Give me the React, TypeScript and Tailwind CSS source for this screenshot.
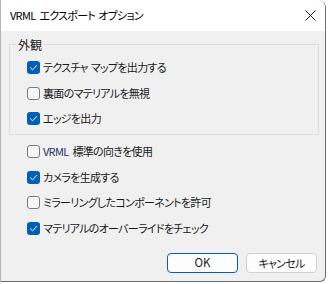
import React from 'react';

const jp = "font-['Noto_Sans_CJK_JP','Noto_Sans',sans-serif] [font-feature-settings:'palt']";
const label = 'text-[11px] leading-none tracking-[-0.7px] text-[#1a1a1a]';

function Check({ checked }: { checked: boolean }) {
  if (checked) {
    return (
      <span className="flex h-[13px] w-[13px] shrink-0 items-center justify-center rounded-[3px] bg-[#005fb8]">
        <svg width="9" height="9" viewBox="0 0 9 9" fill="none">
          <path d="M1.5 4.8 L3.6 6.8 L7.6 2.4" stroke="white" strokeWidth="1" strokeLinecap="round" strokeLinejoin="round" />
        </svg>
      </span>
    );
  }
  return <span className="h-[13px] w-[13px] shrink-0 rounded-[3px] border border-[#7a7a7a] bg-[#f7f7f7]" />;
}

function Row({ checked, children }: { checked: boolean; children: React.ReactNode }) {
  return (
    <div className="flex h-[25.5px] items-center gap-[3px] pl-[27px]">
      <Check checked={checked} />
      <span className={label}>{children}</span>
    </div>
  );
}

export default function App() {
  return (
    <div className={`h-[284px] w-[328px] bg-white ${jp}`}>
      <div className="flex h-[282px] w-[326px] flex-col overflow-hidden rounded-tr-[8px] rounded-br-[6px] border-l border-r border-b border-l-[#b4b4b4] border-r-[#6e6e6e] border-b-[#6e6e6e] bg-[#f0f0f0]">
        {/* title bar */}
        <div className="flex h-[31px] shrink-0 items-center justify-between bg-white pl-[9px] pr-[9px]">
          <span className="text-[11px] leading-none tracking-[-0.7px] text-black">
            VRML<span className="ml-[4px]">エクスポート</span>
            <span className="ml-[3px]">オプション</span>
          </span>
          <svg width="11" height="11" viewBox="0 0 11 11">
            <path d="M0.5 0.5 L10.5 10.5 M10.5 0.5 L0.5 10.5" stroke="#1a1a1a" strokeWidth="1" />
          </svg>
        </div>

        <div className="flex flex-1 flex-col pl-[8px] pr-[6px]">
          <fieldset className="mt-[6px] h-[98px] border border-[#dcdcdc] pt-[3px]">
            <legend className="ml-[6px] px-[2px] text-[12px] leading-[15px] text-[#1a1a1a]">外観</legend>
            <div className="-ml-[10px]">
              <Row checked>
                テクスチャ<span className="ml-[3px]">マップを出力する</span>
              </Row>
              <Row checked={false}>裏面のマテリアルを無視</Row>
              <Row checked>エッジを出力</Row>
            </div>
          </fieldset>

          <div className="-ml-[9px] mt-[4px]">
            <Row checked={false}>
              <span className="text-[#1f2f6e]">VRML</span>
              <span className="ml-[4px]">標準の向きを使用</span>
            </Row>
            <Row checked>カメラを生成する</Row>
            <Row checked={false}>ミラーリングしたコンポーネントを許可</Row>
            <Row checked>マテリアルのオーバーライドをチェック</Row>
          </div>

          <div className="mt-auto mb-[8px] flex justify-end gap-[8px] pr-[2px]">
            <button className="h-[20px] w-[71px] rounded-[4px] border border-[#005fb8] bg-[#fdfdfd] text-[11.5px] leading-none text-[#1a1a1a]">
              OK
            </button>
            <button className={`h-[20px] w-[71px] rounded-[4px] border border-[#d0d0d0] bg-[#fdfdfd] ${label}`}>
              キャンセル
            </button>
          </div>
        </div>
      </div>
    </div>
  );
}
